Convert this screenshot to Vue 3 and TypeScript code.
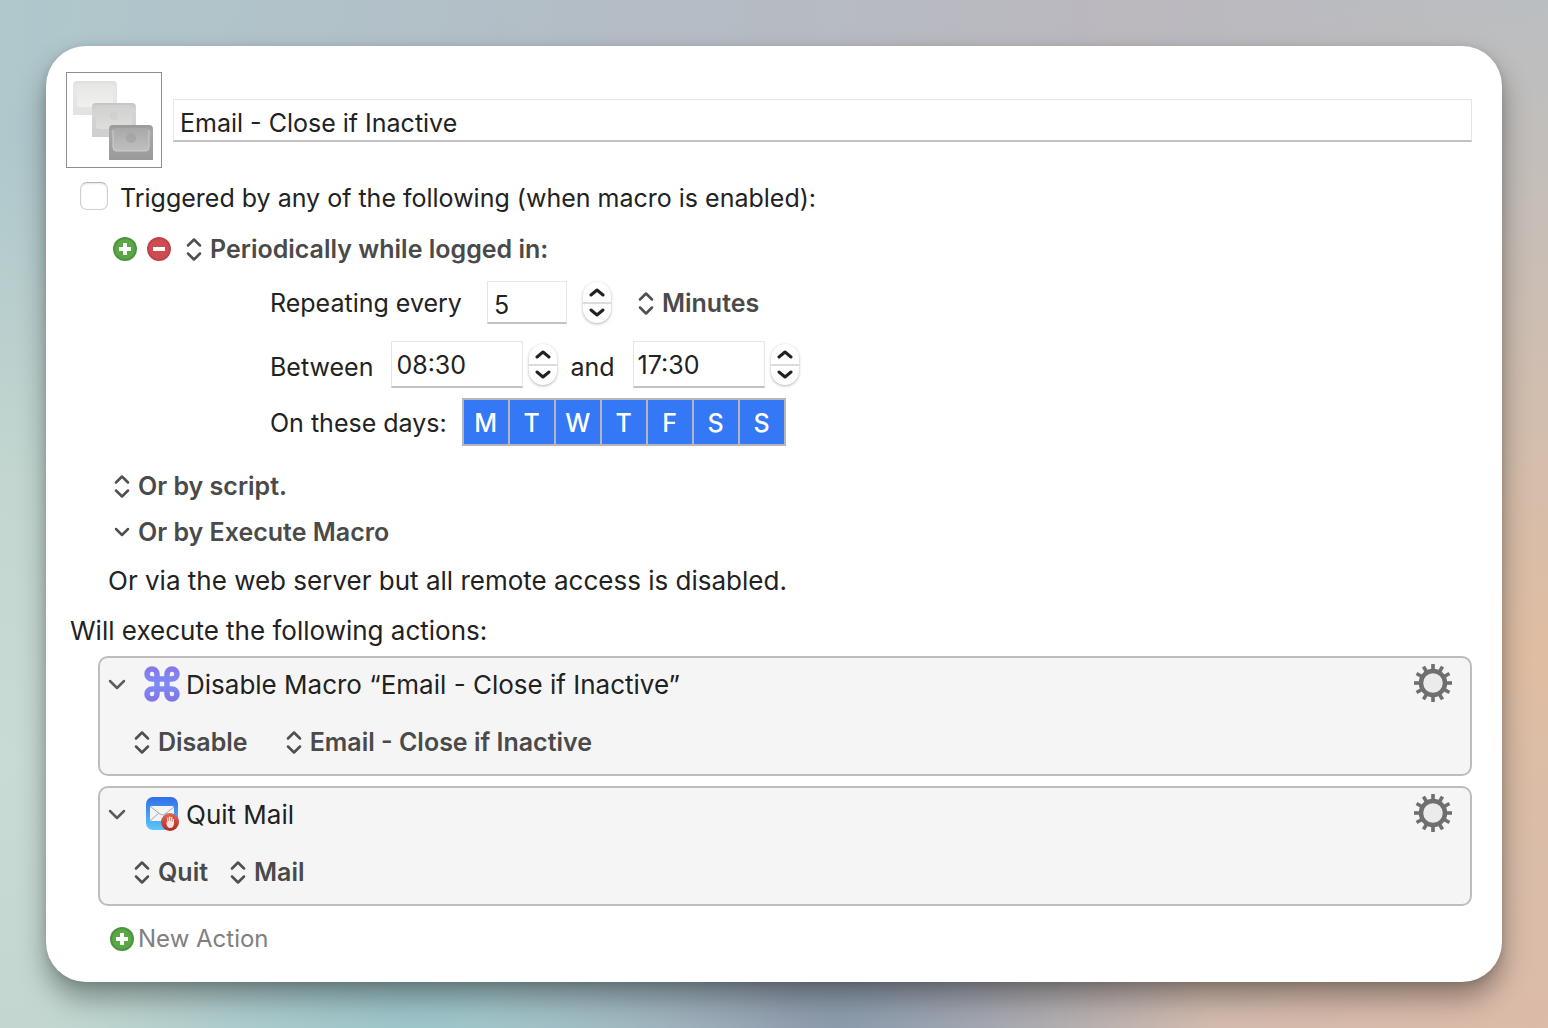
<script setup lang="ts">
import { ref } from 'vue'

interface Choice {
  label: string
  wide?: boolean
}
interface MacroAction {
  title: string
  icon: 'command' | 'mail'
  choices: Choice[]
}

const macroName = ref('Email - Close if Inactive')
const triggered = ref(false)
const interval = ref('5')
const startTime = ref('08:30')
const endTime = ref('17:30')

const days = ref(['M', 'T', 'W', 'T', 'F', 'S', 'S'].map((letter) => ({ letter, on: true })))

const actions: MacroAction[] = [
  {
    title: 'Disable Macro “Email - Close if Inactive”',
    icon: 'command',
    choices: [{ label: 'Disable', wide: true }, { label: 'Email - Close if Inactive' }],
  },
  {
    title: 'Quit Mail',
    icon: 'mail',
    choices: [{ label: 'Quit' }, { label: 'Mail' }],
  },
]

const teeth = Array.from({ length: 12 }, (_, i) => i * 30)
</script>

<template>
  <div class="desktop">
    <main class="editor">
      <header class="title-row">
        <button class="macro-icon" type="button" aria-label="Macro icon">
          <svg viewBox="0 0 94 94" width="94" height="94">
            <defs>
              <linearGradient id="cap1" x1="0" y1="0" x2="0" y2="1">
                <stop offset="0" stop-color="#dededc" /><stop offset=".2" stop-color="#e8e8e6" /><stop offset="1" stop-color="#e2e2e0" />
              </linearGradient>
              <linearGradient id="cap2" x1="0" y1="0" x2="0" y2="1">
                <stop offset="0" stop-color="#c4c4c2" /><stop offset=".2" stop-color="#d4d4d2" /><stop offset="1" stop-color="#cfcfcd" />
              </linearGradient>
              <linearGradient id="cap3" x1="0" y1="0" x2="0" y2="1">
                <stop offset="0" stop-color="#999" /><stop offset=".2" stop-color="#a8a8a8" /><stop offset="1" stop-color="#9a9a9a" />
              </linearGradient>
              <linearGradient id="face1" x1="0" y1="0" x2="0" y2="1">
                <stop offset="0" stop-color="#e6e6e4" /><stop offset="1" stop-color="#f0f0ef" />
              </linearGradient>
              <linearGradient id="face2" x1="0" y1="0" x2="0" y2="1">
                <stop offset="0" stop-color="#d0d0ce" /><stop offset="1" stop-color="#dededd" />
              </linearGradient>
              <linearGradient id="face3" x1="0" y1="0" x2="0" y2="1">
                <stop offset="0" stop-color="#a8a8a8" /><stop offset="1" stop-color="#c0c0c0" />
              </linearGradient>
            </defs>
            <path d="M6 42V12q0-4 4-4h36q4 0 4 4v30z" fill="url(#cap1)" />
            <rect x="10" y="10" width="36" height="24" rx="3" fill="url(#face1)" />
            <path d="M25 64V34q0-4 4-4h36q4 0 4 4v30z" fill="url(#cap2)" />
            <rect x="29" y="32" width="36" height="24" rx="3" fill="url(#face2)" />
            <circle cx="47" cy="43" r="4" fill="#cbcbc9" opacity=".5" />
            <path d="M42 87V56q0-4 4-4h36q4 0 4 4v31z" fill="url(#cap3)" />
            <rect x="46" y="55" width="36" height="23" rx="3" fill="url(#face3)" />
            <path d="M46 57v17q0 4 3 4h30q3 0 3-4V57" fill="none" stroke="#cecece" stroke-width="1" />
            <circle cx="64" cy="65" r="5" fill="#9c9c9c" opacity=".5" />
          </svg>
        </button>
        <input v-model="macroName" class="field name-field" type="text" aria-label="Macro name" />
      </header>

      <label class="trigger-toggle">
        <input v-model="triggered" type="checkbox" />
        <span>Triggered by any of the following (when macro is enabled):</span>
      </label>

      <section class="triggers">
        <div class="trigger-head">
          <button class="round" type="button" aria-label="Add trigger">
            <svg viewBox="0 0 24 24" width="24" height="24">
              <circle cx="12" cy="12" r="12" fill="#4c9440" /><circle cx="12" cy="12" r="10" fill="#5aa843" />
              <path d="M12 6v12M6 12h12" stroke="#fff" stroke-width="4" />
            </svg>
          </button>
          <button class="round" type="button" aria-label="Remove trigger">
            <svg viewBox="0 0 24 24" width="24" height="24">
              <circle cx="12" cy="12" r="12" fill="#c4404d" /><circle cx="12" cy="12" r="10" fill="#cd4c50" />
              <path d="M6 12h12" stroke="#fff" stroke-width="4" />
            </svg>
          </button>
          <button class="popup" type="button">
            <svg class="updown" viewBox="0 0 16 24" width="16" height="24"><path d="M2 8.500l6-6 6 6M2 16.500l6 6 6-6" /></svg>
            <span>Periodically while logged in:</span>
          </button>
        </div>

        <div class="schedule">
          <div class="line repeat">
            <label for="interval">Repeating every</label>
            <input id="interval" v-model="interval" class="field short" type="text" />
            <span class="stepper">
              <button type="button" aria-label="Increase interval"><svg viewBox="0 0 16 10" width="16" height="10"><path d="M2 8l6-5 6 5" /></svg></button>
              <button type="button" aria-label="Decrease interval"><svg viewBox="0 0 16 10" width="16" height="10"><path d="M2 2l6 5 6-5" /></svg></button>
            </span>
            <button class="popup unit" type="button">
              <svg class="updown" viewBox="0 0 16 24" width="16" height="24"><path d="M2 8.500l6-6 6 6M2 16.500l6 6 6-6" /></svg>
              <span>Minutes</span>
            </button>
          </div>

          <div class="line between">
            <label for="start">Between</label>
            <input id="start" v-model="startTime" class="field time" type="text" />
            <span class="stepper">
              <button type="button" aria-label="Later start"><svg viewBox="0 0 16 10" width="16" height="10"><path d="M2 8l6-5 6 5" /></svg></button>
              <button type="button" aria-label="Earlier start"><svg viewBox="0 0 16 10" width="16" height="10"><path d="M2 2l6 5 6-5" /></svg></button>
            </span>
            <label class="and" for="end">and</label>
            <input id="end" v-model="endTime" class="field time" type="text" />
            <span class="stepper">
              <button type="button" aria-label="Later end"><svg viewBox="0 0 16 10" width="16" height="10"><path d="M2 8l6-5 6 5" /></svg></button>
              <button type="button" aria-label="Earlier end"><svg viewBox="0 0 16 10" width="16" height="10"><path d="M2 2l6 5 6-5" /></svg></button>
            </span>
          </div>

          <div class="line on-days">
            <span id="days-label">On these days:</span>
            <div class="days" role="group" aria-labelledby="days-label">
              <button
                v-for="(day, i) in days"
                :key="i"
                type="button"
                :class="{ on: day.on }"
                :aria-pressed="day.on"
                @click="day.on = !day.on"
              >{{ day.letter }}</button>
            </div>
          </div>
        </div>

        <div class="others">
          <button class="popup" type="button">
            <svg class="updown" viewBox="0 0 16 24" width="16" height="24"><path d="M2 8.500l6-6 6 6M2 16.500l6 6 6-6" /></svg>
            <span>Or by script.</span>
          </button>
          <button class="popup" type="button">
            <svg class="updown" viewBox="0 0 16 24" width="16" height="24"><path d="M2 9l6 6 6-6" /></svg>
            <span>Or by Execute Macro</span>
          </button>
        </div>
        <p class="web">Or via the web server but all remote access is disabled.</p>
      </section>

      <h2 class="will">Will execute the following actions:</h2>

      <ul class="actions">
        <li v-for="action in actions" :key="action.title" class="action">
          <div class="action-head">
            <button class="disclose" type="button" aria-label="Collapse action">
              <svg viewBox="0 0 18 12" width="18" height="12"><path d="M2 2l7 7 7-7" /></svg>
            </button>
            <svg v-if="action.icon === 'command'" class="glyph" viewBox="0 0 36 36" width="36" height="36">
              <defs>
                <linearGradient id="cmd" x1="0" y1="0" x2="0" y2="1">
                  <stop offset="0" stop-color="#8878ea" /><stop offset=".5" stop-color="#7c8cf8" /><stop offset="1" stop-color="#8078ea" />
                </linearGradient>
              </defs>
              <path
                d="M13 13V8a5 5 0 1 0-5 5zM23 13h5a5 5 0 1 0-5-5zM23 23v5a5 5 0 1 0 5-5zM13 23H8a5 5 0 1 0 5 5zM13 13h10v10H13z"
                fill="none" stroke="url(#cmd)" stroke-width="5.500"
              />
            </svg>
            <svg v-else class="glyph" viewBox="0 0 36 36" width="36" height="36">
              <defs>
                <linearGradient id="sky" x1="0" y1="0" x2="0" y2="1">
                  <stop offset="0" stop-color="#2f6fe8" /><stop offset="1" stop-color="#5fc6fb" />
                </linearGradient>
                <linearGradient id="stop" x1="0" y1="0" x2="0" y2="1">
                  <stop offset="0" stop-color="#e0685a" /><stop offset="1" stop-color="#b02a1f" />
                </linearGradient>
              </defs>
              <rect x="2" y="1" width="32" height="33" rx="7" fill="url(#sky)" />
              <rect x="6" y="10" width="24" height="15" rx="2" fill="#f4f4f6" />
              <path d="M7 11l9 7q2.500 2 5 0l9-7M7 24l8-7M30 24l-8-7" fill="none" stroke="#a9a9b2" stroke-width="1" />
              <circle cx="26" cy="26" r="9" fill="url(#stop)" />
              <path d="M22.500 25v3.500q1 3.500 3.800 3.500t3.700-4v-5h-1.200v2.500h-.6v-4.500h-1.300v4h-.6v-4.500h-1.300v4.500h-.6v-3.500h-1.200v6z" fill="#fbe4df" />
            </svg>
            <h3>{{ action.title }}</h3>
            <button class="gear" type="button" aria-label="Action options">
              <svg viewBox="0 0 40 40" width="40" height="40">
                <circle cx="20" cy="20" r="12" fill="#ebebeb" stroke="#6f6f6f" stroke-width="4.500" />
                <path v-for="angle in teeth" :key="angle" d="M20 7V1" :transform="`rotate(${angle} 20 20)`" stroke="#6f6f6f" stroke-width="3.600" />
              </svg>
            </button>
          </div>
          <div class="choices">
            <button v-for="choice in action.choices" :key="choice.label" class="popup" :class="{ wide: choice.wide }" type="button">
              <svg class="updown" viewBox="0 0 16 24" width="16" height="24"><path d="M2 8.500l6-6 6 6M2 16.500l6 6 6-6" /></svg>
              <span>{{ choice.label }}</span>
            </button>
          </div>
        </li>
      </ul>

      <button class="new-action" type="button">
        <svg viewBox="0 0 24 24" width="24" height="24">
          <circle cx="12" cy="12" r="12" fill="#4c9440" /><circle cx="12" cy="12" r="10" fill="#5aa843" />
          <path d="M12 6v12M6 12h12" stroke="#fff" stroke-width="4" />
        </svg>
        <span>New Action</span>
      </button>
    </main>
  </div>
</template>

<style>
body {
  margin: 0;
}
</style>

<style scoped>
.desktop {
  box-sizing: border-box;
  min-height: 100vh;
  padding: 46px;
  background:
    radial-gradient(ellipse 24% 30% at 27% 100%, #9cc6ca 0%, rgba(156, 198, 202, 0) 100%),
    radial-gradient(ellipse 24% 30% at 54% 100%, #8b9bad 0%, rgba(139, 155, 173, 0) 100%),
    radial-gradient(ellipse 40% 60% at 0% 74%, #c8dbd4 0%, #c3d7d0 45%, rgba(200, 219, 212, 0) 100%),
    radial-gradient(ellipse 50% 66% at 100% 64%, #e0bda2 0%, rgba(222, 188, 168, 0) 100%),
    radial-gradient(ellipse 60% 40% at 100% 100%, #d8b9ad 0%, rgba(208, 178, 166, 0) 100%),
    linear-gradient(96deg, #afc8cc 0%, #b3bdc6 35%, #bbb8be 68%, #b9bfc3 96%);
  font-family: Inter, "Liberation Sans", sans-serif;
  font-size: 25px;
  line-height: 32px;
  color: #222;
}
.editor {
  box-sizing: border-box;
  min-height: calc(100vh - 92px);
  padding: 26px 30px 26px 20px;
  border-radius: 40px;
  background: #fff;
  box-shadow: 0 16px 28px rgba(0, 0, 0, 0.36), 0 2px 8px rgba(0, 0, 0, 0.12);
}
button {
  padding: 0;
  border: 0;
  background: none;
  font: inherit;
  color: inherit;
}
h2,
h3,
p,
ul {
  margin: 0;
  padding: 0;
  font: inherit;
  list-style: none;
}
svg {
  display: block;
  flex: none;
}

.title-row {
  display: flex;
  align-items: center;
  gap: 11px;
}
.macro-icon {
  flex: none;
  border: 1px solid #8f8f8f;
  background: #fff;
}
.field {
  box-sizing: border-box;
  height: 43px;
  padding: 6px 6px 0;
  border: 1px solid #e6e6e6;
  border-bottom: 2px solid #c2c2c2;
  border-radius: 0;
  background: #fff;
  font: inherit;
  color: inherit;
  outline: 0;
}
.name-field {
  flex: 1;
  min-width: 0;
}

.trigger-toggle {
  display: flex;
  align-items: center;
  gap: 12px;
  margin: 14px 0 0 14px;
}
.trigger-toggle input {
  appearance: none;
  box-sizing: border-box;
  width: 28px;
  height: 28px;
  margin: 0 0 4px;
  border: 1px solid #cfcfcf;
  border-top-color: #b4b4b4;
  border-radius: 7px;
  background: #fff;
  box-shadow: inset 0 1px 2px rgba(0, 0, 0, 0.1);
}

.trigger-head {
  display: flex;
  align-items: center;
  gap: 10px;
  margin: 19px 0 0 47px;
}
.popup {
  display: flex;
  align-items: center;
  gap: 8px;
  font-weight: 600;
  color: #4a4a4a;
  white-space: nowrap;
}
.trigger-head .popup {
  padding-left: 5px;
}
.updown {
  fill: none;
  stroke: #4f4f4f;
  stroke-width: 2.5;
  stroke-linecap: round;
  stroke-linejoin: round;
}

.schedule {
  margin-left: 204px;
}
.line {
  display: flex;
  align-items: center;
}
.repeat {
  margin-top: 16px;
}
.short {
  width: 80px;
  margin: 0 16px 0 25px;
}
.unit {
  margin-left: 27px;
}
.between {
  margin-top: 17px;
}
.between label {
  padding-top: 4px;
}
.time {
  width: 132px;
  height: 47px;
  padding: 2px 4px 0;
  margin: 0 6px 0 18px;
}
.and {
  margin-left: 13px;
}
.stepper {
  display: flex;
  flex-direction: column;
  width: 28px;
  height: 41px;
  border-radius: 14px;
  background: #fff;
  box-shadow: 0 1px 3px rgba(0, 0, 0, 0.3);
}
.stepper button {
  display: flex;
  flex: 1;
  align-items: center;
  justify-content: center;
}
.stepper button + button {
  border-top: 2px solid #dcdcdc;
}
.stepper path {
  fill: none;
  stroke: #222;
  stroke-width: 3;
  stroke-linecap: round;
  stroke-linejoin: round;
}
.on-days {
  gap: 15px;
  margin-top: 10px;
}
.on-days > span,
.days button {
  padding-top: 2px;
}
.days {
  display: flex;
  gap: 2px;
  padding: 2px;
  background: #b4b6bb;
}
.days button {
  width: 44px;
  height: 44px;
  background: #fff;
}
.days .on {
  background: #3478f6;
  color: #fff;
  font-weight: 500;
}

.others {
  display: grid;
  justify-items: start;
  gap: 14px;
  margin: 24px 0 0 48px;
}
.web,
.will,
.action h3 {
  font-size: 26px;
}
.web {
  margin: 17px 0 0 42px;
}
.will {
  margin: 18px 0 0 4px;
}

.actions {
  display: grid;
  gap: 10px;
  margin: 9px 0 0 32px;
}
.action {
  box-sizing: border-box;
  height: 120px;
  padding: 5px 17px 0 8px;
  border: 2px solid #bdbdbd;
  border-radius: 10px;
  background: #f5f5f5;
}
.action-head {
  display: flex;
  align-items: center;
}
.disclose,
.action h3 {
  padding-top: 4px;
}
.disclose path {
  fill: none;
  stroke: #5c5c5c;
  stroke-width: 2.5;
  stroke-linecap: round;
  stroke-linejoin: round;
}
.glyph {
  margin: 2px 6px 0 18px;
}
.gear {
  margin-left: auto;
}
.choices {
  display: flex;
  gap: 22px;
  margin: 23px 0 0 26px;
}
.wide {
  margin-right: 16px;
}

.new-action {
  display: flex;
  align-items: center;
  gap: 4px;
  margin: 17px 0 0 44px;
  font-size: 24px;
  color: #808080;
}
</style>
